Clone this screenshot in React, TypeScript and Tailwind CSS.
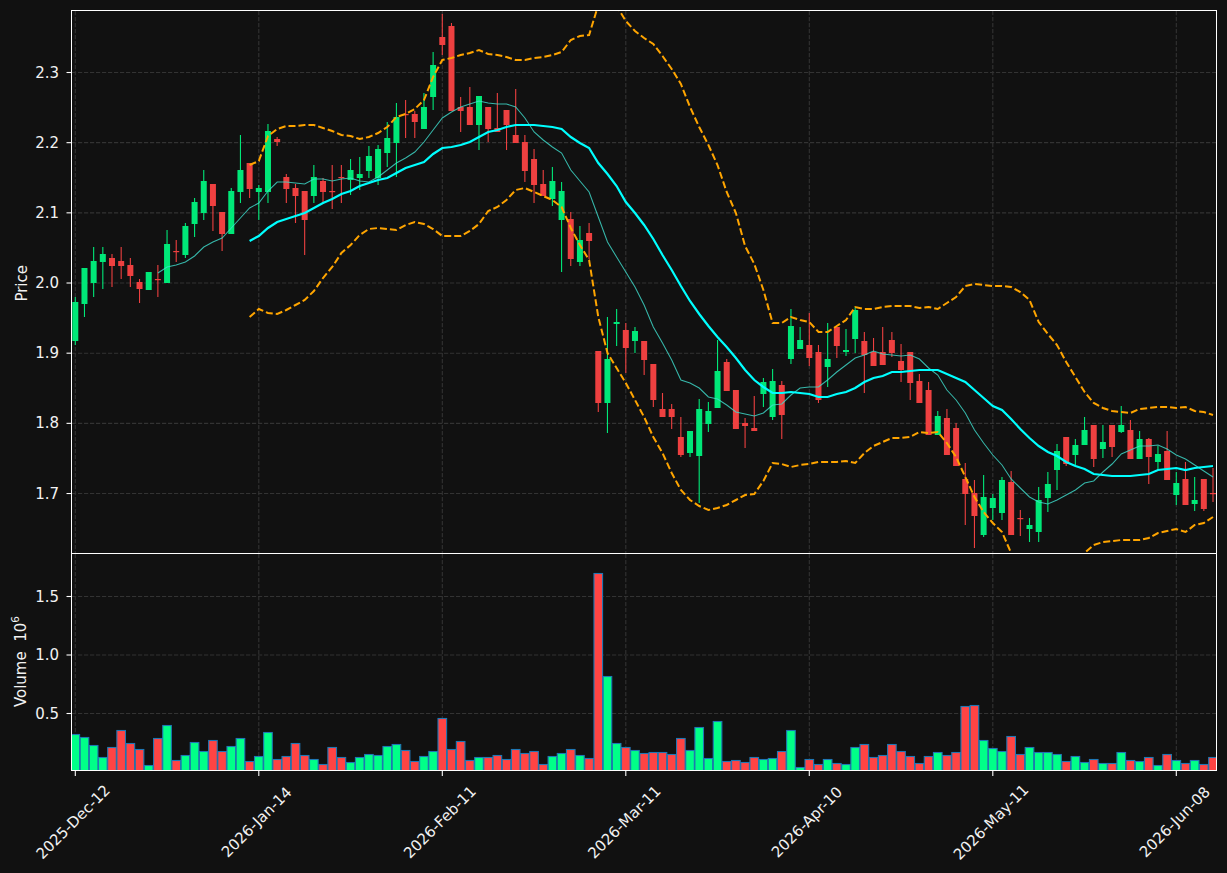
// [wick top, body top, body bottom, wick bottom, up?] in page pixels
const candles: [number, number, number, number, number][] = [
  [297,302,341,345,1],[268,268,304,317,1],[247,261,283,297,1],[247,254,262,289,1],[254,258,266,287,0],
  [247,261,266,279,0],[258,265,276,287,0],[279,282,289,303,0],[272,272,290,290,1],[265,279,280,297,0],
  [230,244,283,283,1],[240,251,252,262,0],[223,226,255,258,1],[198,202,224,237,1],[170,181,213,220,1],
  [184,184,206,231,0],[212,212,234,251,0],[188,191,234,234,1],[135,170,192,203,1],[163,163,189,198,0],
  [185,188,192,220,1],[124,131,192,203,1],[137,139,142,146,0],[174,177,189,203,0],[184,188,196,223,0],
  [191,191,220,255,0],[165,177,196,203,1],[178,181,192,203,0],[165,191,192,209,0],[165,177,178,203,0],
  [159,170,180,195,1],[157,174,178,190,1],[146,156,171,178,1],[145,149,178,185,1],[122,138,153,167,1],
  [103,117,143,177,1],[100,114,115,138,0],[111,114,122,138,0],[93,107,129,129,1],[52,65,97,110,1],
  [14,37,45,55,0],[23,26,111,111,0],[97,107,111,132,0],[87,107,125,125,0],[96,96,125,150,1],
  [107,107,129,142,0],[93,128,132,132,0],[110,110,125,150,0],[89,135,143,143,0],[135,142,171,182,0],
  [149,159,185,203,0],[170,184,196,196,0],[167,181,199,206,1],[182,191,220,272,1],[212,219,259,266,0],
  [226,240,262,266,1],[223,233,241,259,0],[351,351,403,412,0],[317,359,403,433,1],[309,322,324,346,1],
  [323,330,348,373,0],[327,331,341,353,1],[341,341,360,375,0],[364,364,400,407,0],[393,409,417,417,0],
  [404,409,417,429,0],[417,437,455,457,0],[431,431,453,457,1],[399,409,456,503,1],[402,411,424,432,1],
  [340,371,408,408,1],[359,362,391,391,0],[390,390,429,429,0],[418,423,426,448,0],[396,428,431,431,0],
  [378,382,394,407,1],[369,381,417,420,1],[381,385,415,439,0],[309,326,359,364,1],[327,340,349,349,1],
  [313,345,358,366,0],[345,352,400,403,0],[323,359,367,387,1],[327,327,346,358,0],[329,350,352,356,1],
  [307,310,339,353,1],[332,341,355,393,0],[338,352,366,366,0],[327,352,365,365,0],[332,340,353,357,0],
  [344,361,370,382,0],[352,352,383,400,0],[374,381,403,403,0],[382,390,435,435,0],[411,416,435,435,1],
  [409,418,455,455,0],[423,428,466,466,0],[463,479,494,525,0],[480,493,516,548,0],[475,497,535,537,1],
  [494,498,508,520,1],[477,480,513,520,1],[471,482,535,535,0],[510,518,519,536,0],[518,525,529,542,1],
  [487,500,532,542,1],[472,484,498,512,1],[444,451,470,490,1],[437,437,464,466,0],[439,445,455,465,1],
  [417,430,445,445,1],[425,425,459,467,0],[425,442,449,458,1],[425,425,447,457,0],[406,425,432,433,1],
  [420,430,459,459,0],[431,439,459,459,1],[438,439,457,484,0],[446,454,462,470,1],[431,451,480,480,0],
  [472,483,495,505,1],[462,479,505,505,0],[477,500,504,511,1],[479,479,509,511,0],[468,493,494,502,0],
];

const volumeTops = [
  734,737,745,757,747,730,743,749,765,738,
  725,760,755,742,751,740,751,746,738,761,
  756,732,759,756,743,755,759,764,747,757,
  762,757,754,755,746,744,750,761,756,751,
  718,749,741,760,757,757,755,759,749,753,
  751,764,756,753,749,755,758,573,676,743,
  747,750,753,752,752,754,738,750,727,758,
  721,761,760,762,757,759,758,751,730,767,
  759,764,759,763,764,747,744,757,755,744,
  751,756,763,756,752,755,752,706,705,740,
  748,751,736,754,747,752,752,754,761,756,
  762,759,763,763,752,760,761,757,765,754,
  760,763,760,764,757,
];

// ma lines start part way through the data
const fastMa = [
  273,267,265,262,256,247,242,238,228,218,
  208,203,191,182,182,183,184,179,179,181,
  179,178,181,182,177,170,163,158,152,142,
  130,118,112,107,104,101,103,104,104,107,
  118,132,140,147,153,170,181,192,217,242,
  257,272,287,305,327,343,360,380,383,388,
  397,399,405,412,414,416,413,405,404,395,
  388,387,387,380,372,365,358,355,351,354,
  355,356,355,359,368,375,390,400,413,430,
  443,455,465,479,488,497,502,504,500,495,
  490,483,481,472,464,454,450,446,446,445,
  449,455,459,465,471,477,
];

const slowMa = [
  241,236,228,222,219,216,213,208,203,199,
  194,191,186,183,180,178,173,168,165,162,
  154,148,147,145,142,137,132,130,127,125,
  125,125,126,127,129,137,143,148,163,174,
  186,202,213,225,239,255,270,286,301,314,
  326,337,347,358,370,380,387,393,393,392,
  393,394,397,397,394,392,388,382,378,376,
  372,372,371,370,370,370,374,378,382,390,
  398,406,410,419,429,438,446,452,456,462,
  466,469,474,475,476,476,476,475,474,470,
  469,468,470,468,467,466,
];

const upperBand = [
  165,161,136,129,126,126,125,125,128,131,
  135,136,139,137,133,127,117,114,109,100,
  77,60,58,55,53,50,54,55,57,60,
  60,58,57,55,52,40,36,35,5,-5,
  6,21,31,38,44,56,69,84,107,127,
  145,165,192,213,246,264,290,323,323,317,
  320,322,332,332,326,320,307,309,309,307,
  306,306,306,308,307,309,303,297,286,284,
  285,286,286,287,292,300,322,334,345,362,
  377,392,403,408,411,412,413,409,408,407,
  407,408,407,411,412,415,
];

const lowerBand = [
  317,309,313,314,310,305,300,291,278,267,
  253,245,235,229,228,229,230,225,222,224,
  229,236,236,236,231,224,211,207,200,190,
  188,192,196,200,207,228,245,260,317,353,
  368,383,400,417,437,453,473,490,500,506,
  510,508,505,500,495,494,481,463,464,467,
  465,464,462,462,462,461,463,453,446,442,
  438,438,437,432,433,432,443,457,477,497,
  512,523,532,553,572,590,600,610,605,595,
  575,553,545,542,541,540,540,540,538,533,
  531,529,532,525,523,517,
];

const priceTicks = ["2.3", "2.2", "2.1", "2.0", "1.9", "1.8", "1.7"];
const volumeTicks = ["1.5", "1.0", "0.5"];
const dateTicks = ["2025-Dec-12", "2026-Jan-14", "2026-Feb-11", "2026-Mar-11", "2026-Apr-10", "2026-May-11", "2026-Jun-08"];

const priceGridY = priceTicks.map((_, i) => 72.5 + 70.17 * i);
const volumeGridY = volumeTicks.map((_, i) => 596.5 + 58.5 * i);
const xAt = (i: number) => 75.3 + 9.175 * i;
const dateGridX = dateTicks.map((_, i) => xAt(i * 20));

const linePoints = (ys: number[], start: number) =>
  ys.map((y, i) => `${xAt(start + i).toFixed(1)},${y}`).join(" ");

const Grid = ({ ys, top, bottom }: { ys: number[]; top: number; bottom: number }) => (
  <g>
    {ys.map((y) => (
      <g key={y}>
        <line x1="72" x2="1216" y1={y} y2={y} stroke="#333333" strokeWidth="1.1" strokeDasharray="4.2 1.8" />
        <line x1="66.5" x2="72" y1={y} y2={y} stroke="#ffffff" strokeWidth="1.1" />
      </g>
    ))}
    {dateGridX.map((x) => (
      <line key={x} x1={x} x2={x} y1={top} y2={bottom} stroke="#333333" strokeWidth="1.1" strokeDasharray="4.2 1.8" />
    ))}
  </g>
);

const PricePlot = () => (
  <svg viewBox="72 11 1144 542" className="block w-[1144px] h-[542px] overflow-visible">
    <defs>
      <clipPath id="price-clip">
        <rect x="72" y="11" width="1144" height="542" />
      </clipPath>
    </defs>
    <Grid ys={priceGridY} top={11} bottom={553} />
    <g clipPath="url(#price-clip)">
      {candles.map(([high, top, bottom, low, up], i) => {
        const color = up ? "#00e878" : "#ee4040";
        return (
          <g key={i}>
            <line x1={xAt(i)} x2={xAt(i)} y1={high} y2={low} stroke={color} strokeWidth="1.1" />
            <rect x={xAt(i) - 3} y={top} width="6" height={Math.max(bottom - top, 1.2)} fill={color} />
          </g>
        );
      })}
      <polyline points={linePoints(fastMa, 9)} fill="none" stroke="#40e0d0" strokeOpacity="0.8" strokeWidth="1.05" />
      <polyline points={linePoints(slowMa, 19)} fill="none" stroke="#00ffff" strokeWidth="2.2" />
      <polyline points={linePoints(upperBand, 19)} fill="none" stroke="#ffa500" strokeWidth="2" strokeDasharray="7 3" />
      <polyline points={linePoints(lowerBand, 19)} fill="none" stroke="#ffa500" strokeWidth="2" strokeDasharray="7 3" />
    </g>
  </svg>
);

const VolumePlot = () => (
  <svg viewBox="72 554 1144 216" className="block w-[1144px] h-[216px] overflow-visible">
    <defs>
      <clipPath id="volume-clip">
        <rect x="72" y="554" width="1144" height="216" />
      </clipPath>
    </defs>
    <Grid ys={volumeGridY} top={554} bottom={770} />
    <g clipPath="url(#volume-clip)">
      {volumeTops.map((top, i) => (
        <rect
          key={i}
          x={xAt(i) - 4.3}
          y={top + 0.5}
          width="8.6"
          height={772 - top}
          fill={candles[i][4] ? "#00ff88" : "#ff4444"}
          stroke="#1f77b4"
          strokeWidth="1.1"
        />
      ))}
    </g>
    {dateGridX.map((x) => (
      <line key={x} x1={x} x2={x} y1="771" y2="776" stroke="#ffffff" strokeWidth="1.1" />
    ))}
  </svg>
);

export default function App() {
  return (
    <div className="w-[1227px] h-[873px] bg-[#111111] text-[#f2f2f2] flex flex-col pt-[10px] overflow-hidden font-['DejaVu_Sans',sans-serif] text-[15px] leading-none">
      <div className="flex h-[544px] shrink-0">
        <div className="w-[36px] pl-[8px] flex items-center justify-center">
          <span className="[writing-mode:vertical-rl] rotate-180 relative top-[1px]">Price</span>
        </div>
        <div className="w-[35px] pr-[12px] pt-[28px] flex flex-col items-end">
          {priceTicks.map((t) => (
            <div key={t} className="h-[70.17px] flex items-center">{t}</div>
          ))}
        </div>
        <div className="w-[1146px] border border-white">
          <PricePlot />
        </div>
      </div>

      <div className="flex h-[217px] shrink-0">
        <div className="w-[36px] pl-[2px] flex items-center justify-center">
          <span className="[writing-mode:vertical-rl] rotate-180 whitespace-pre relative top-[-1px]">
            Volume  10<sup className="static align-super text-[10.5px] leading-none">6</sup>
          </span>
        </div>
        <div className="w-[35px] pr-[12px] pt-[14px] flex flex-col items-end">
          {volumeTicks.map((t) => (
            <div key={t} className="h-[58.5px] flex items-center">{t}</div>
          ))}
        </div>
        <div className="w-[1146px] border-x border-b border-white">
          <VolumePlot />
        </div>
      </div>

      <div className="flex flex-1 ml-[-18px]">
        {dateTicks.map((d) => (
          <div key={d} className="w-[183.5px] shrink-0 flex items-center justify-center">
            <span className="whitespace-nowrap -rotate-45">{d}</span>
          </div>
        ))}
      </div>
    </div>
  );
}
